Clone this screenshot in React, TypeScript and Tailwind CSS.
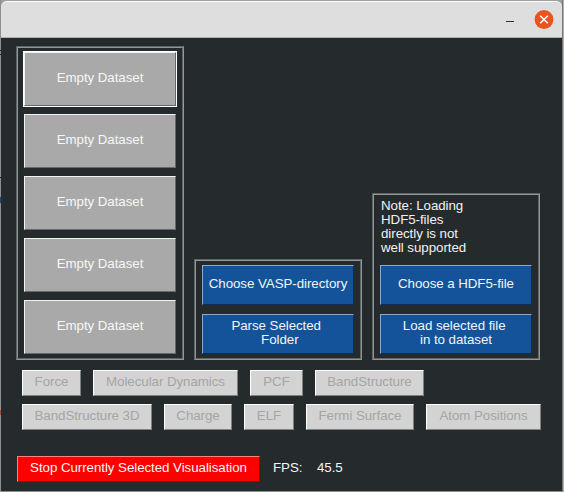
import React from "react";

const datasets = [0, 1, 2, 3, 4];

function Group({ className, children }: { className: string; children: React.ReactNode }) {
  return (
    <div className={`w-[168px] border border-t-[#5f6468] border-l-[#5f6468] border-r-[#94979a] border-b-[#94979a] ${className}`}>
      <div className="flex h-full flex-col border border-t-[#94979a] border-l-[#94979a] border-r-[#5f6468] border-b-[#5f6468]">
        {children}
      </div>
    </div>
  );
}

function BlueButton({ lines }: { lines: string[] }) {
  return (
    <button className="ml-[6px] flex h-10 w-[152px] shrink-0 flex-col items-center justify-center whitespace-pre border border-t-[#8caad0] border-l-[#8caad0] border-r-[#0b2e55] border-b-[#0b2e55] bg-[#145399] pb-[3px] leading-[14px] text-[#f2f4f7]">
      {lines.map((l) => (
        <span key={l}>{l}</span>
      ))}
    </button>
  );
}

function ModeButton({ label, width }: { label: string; width: string }) {
  return (
    <button className={`h-[26px] shrink-0 whitespace-nowrap border border-t-white border-l-white border-r-[#7e8082] border-b-[#7e8082] bg-[#d3d3d3] pb-[3px] leading-[21px] text-[#a5a5a5] ${width}`}>
      {label}
    </button>
  );
}

export default function App() {
  return (
    <div className="h-[492px] w-[564px] overflow-hidden bg-[#a0a0a0] font-['Liberation_Sans',Arial,sans-serif] text-[13.33px] tracking-[-0.06px]">
      <div className="flex h-full">
        <div className="flex w-px flex-col bg-[#8d8d8d]">
          <div className="mt-[50px] h-px bg-[#222]" />
          <div className="mt-[3px] h-px bg-[#222]" />
          <div className="mt-[122px] h-px bg-[#222]" />
          <div className="mt-[19px] h-[6px] bg-[#174a7c]" />
          <div className="mt-[207px] h-[5px] bg-[#a35422]" />
        </div>
        <div className="flex w-[561px] flex-col border-t border-[#a0a0a0]">
          <header className="flex h-[37px] shrink-0 items-center justify-end rounded-t-[6px] border-t border-b border-t-white border-b-[#a9adae] bg-[#dedede] pr-2">
            <div className="mt-[3px] mr-[20px] h-px w-2 bg-[#333]" />
            <svg width="20" height="20" viewBox="0 0 20 20">
              <circle cx="10" cy="9.5" r="9.4" fill="#e95420" />
              <path d="M6.2 5.7l7.6 7.6M13.8 5.7l-7.6 7.6" stroke="#fff" strokeWidth="1.5" />
            </svg>
          </header>
          <main className="h-[453px] shrink-0 bg-[#252a2d]">
            <div className="flex h-[322px] items-end gap-[10px] pl-[15px]">
              <Group className="h-[314px]">
                <div className="flex flex-col gap-2 pt-1 pl-[6px]">
                  {datasets.map((i) => (
                    <button
                      key={i}
                      className={`h-[54px] w-[152px] border border-t-[#f2f2f2] border-l-[#f2f2f2] border-r-[#66686a] border-b-[#66686a] bg-[#a9a9a9] pb-[3px] text-[#f7f7f7] ${i === 0 ? "outline outline-1 outline-white" : ""}`}
                    >
                      Empty Dataset
                    </button>
                  ))}
                </div>
              </Group>
              <Group className="h-[101px]">
                <div className="flex flex-col gap-[9px] pt-1">
                  <BlueButton lines={["Choose VASP-directory"]} />
                  <BlueButton lines={["Parse Selected ", " Folder"]} />
                </div>
              </Group>
              <Group className="h-[167px]">
                <div className="flex flex-col gap-[9px] pt-1">
                  <p className="h-[57px] pl-[7px] leading-[14px] text-[#f2f2f2]">
                    Note: Loading
                    <br />
                    HDF5-files
                    <br />
                    directly is not
                    <br />
                    well supported
                  </p>
                  <BlueButton lines={["Choose a HDF5-file"]} />
                  <BlueButton lines={["Load selected file ", "in to dataset"]} />
                </div>
              </Group>
            </div>
            <div className="mt-[10px] ml-[21px] flex gap-3">
              <ModeButton label="Force" width="w-[59px]" />
              <ModeButton label="Molecular Dynamics" width="w-[145px]" />
              <ModeButton label="PCF" width="w-[53px]" />
              <ModeButton label="BandStructure" width="w-[109px]" />
            </div>
            <div className="mt-2 ml-[21px] flex gap-3">
              <ModeButton label="BandStructure 3D" width="w-[130px]" />
              <ModeButton label="Charge" width="w-[68px]" />
              <ModeButton label="ELF" width="w-[50px]" />
              <ModeButton label="Fermi Surface" width="w-[108px]" />
              <ModeButton label="Atom Positions" width="w-[115px]" />
            </div>
            <div className="mt-[26px] ml-4 flex text-[#f5f5f5]">
              <button className="h-[26px] w-[243px] whitespace-nowrap border border-t-[#ff8080] border-l-[#ff8080] border-r-[#b00000] border-b-[#b00000] bg-[#ff0000] pb-[3px] leading-[21px]">
                Stop Currently Selected Visualisation
              </button>
              <span className="ml-[13px] w-[44px] leading-[23px]">FPS:</span>
              <span className="leading-[23px]">45.5</span>
            </div>
          </main>
          <div className="h-px bg-[#8b8d8e]" />
        </div>
        <div className="w-[2px] border-l border-[#777] bg-[#b0b0b0]" />
      </div>
    </div>
  );
}
